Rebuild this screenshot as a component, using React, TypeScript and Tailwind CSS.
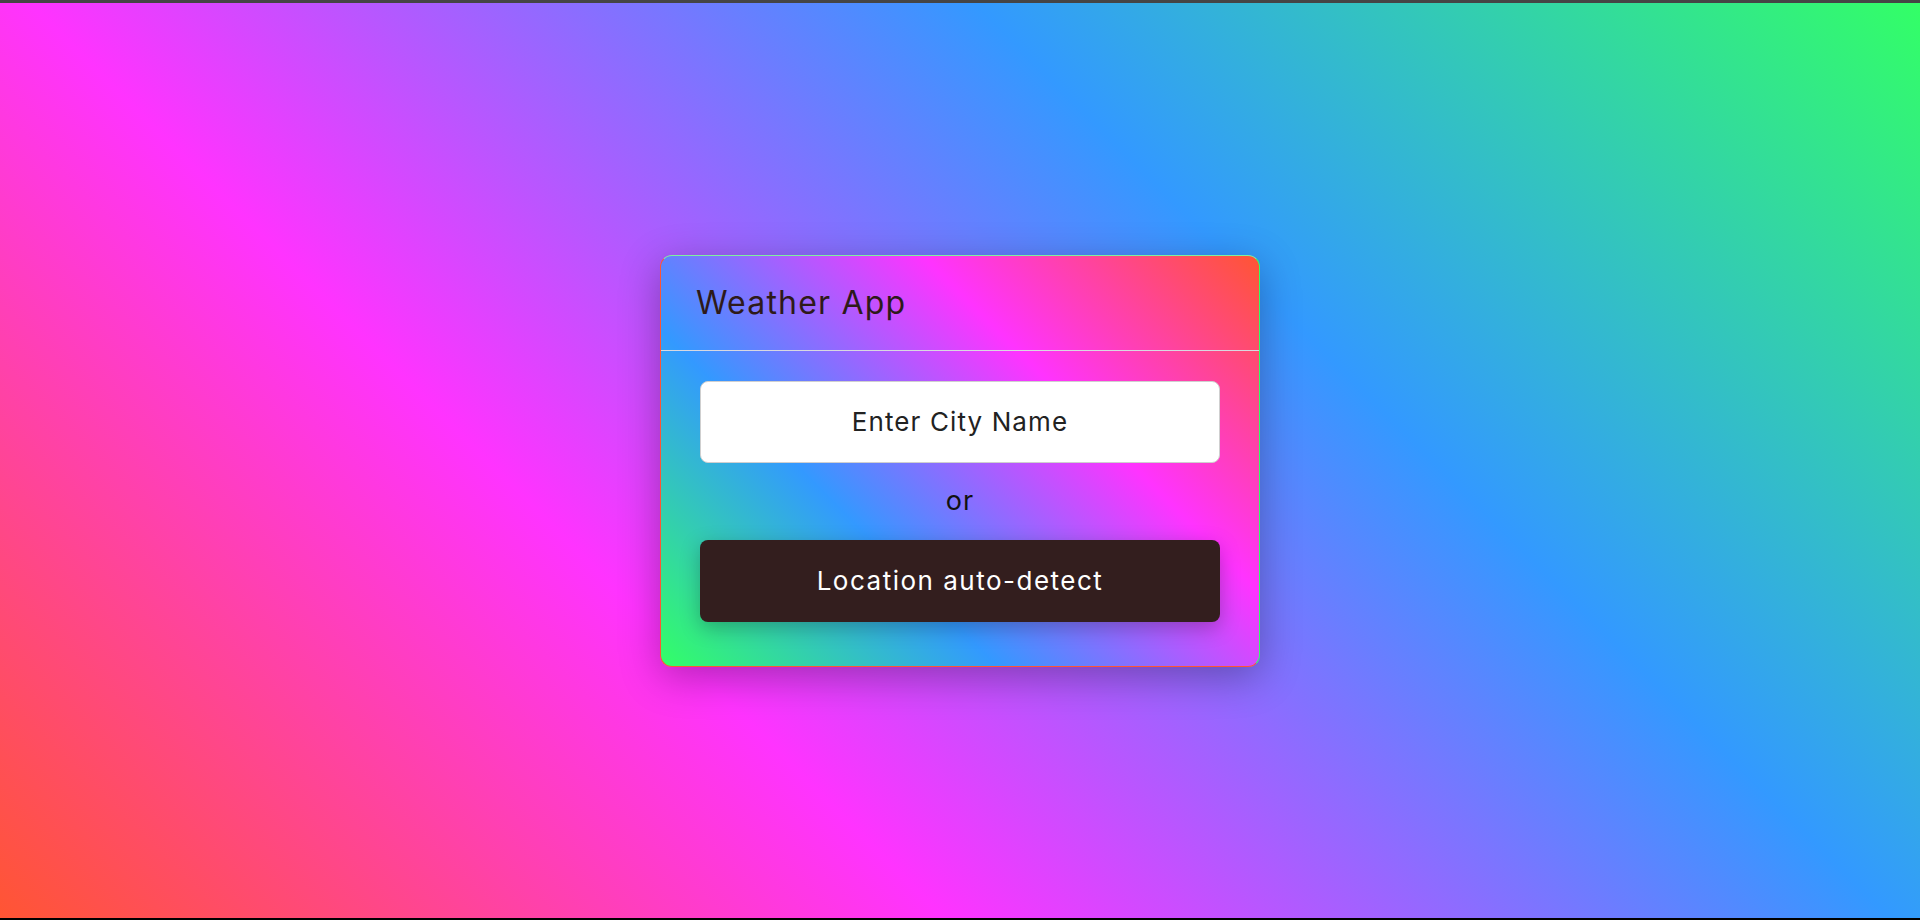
import React from "react";

export default function App() {
  return (
    <div className="flex h-screen w-full flex-col font-['Inter',sans-serif]">
      <div className="h-[3px] w-full bg-[#454545]" />
      <main className="flex flex-1 items-center justify-center bg-[linear-gradient(45deg,#ff5533,#ff33ff,#3399ff,#33ff66)]">
        <div className="w-[600px] overflow-hidden rounded-xl border border-t-[#7ff0a0] border-r-[#33ff66] border-b-[#ff5533] border-l-[#ff5533] bg-[linear-gradient(45deg,#33ff66,#3399ff,#ff33ff,#ff5533)] shadow-[0_10px_40px_rgba(0,0,0,0.3)]">
          <div className="flex h-[95px] items-center border-b border-[#d8d8e0] px-[35px]">
            <h1 className="text-[32px] font-normal tracking-[1.2px] text-[#2e1a1a]">Weather App</h1>
          </div>
          <div className="flex flex-col items-stretch px-[39px] pb-[44px] pt-[30px]">
            <input
              type="text"
              placeholder="Enter City Name"
              className="h-[82px] w-full rounded-lg border border-[#cfcfcf] bg-white text-center text-[26px] tracking-[1.1px] text-[#222] outline-none placeholder:text-[#222]"
            />
            <div className="flex h-[77px] items-center justify-center text-[27px] tracking-[1px] text-[#111]">or</div>
            <button className="h-[82px] w-full rounded-lg bg-[#331e1e] text-[26px] tracking-[1.5px] text-white shadow-[0_6px_20px_rgba(0,0,0,0.25)]">
              Location auto-detect
            </button>
          </div>
        </div>
      </main>
      <div className="h-[2px] w-full bg-black" />
    </div>
  );
}
